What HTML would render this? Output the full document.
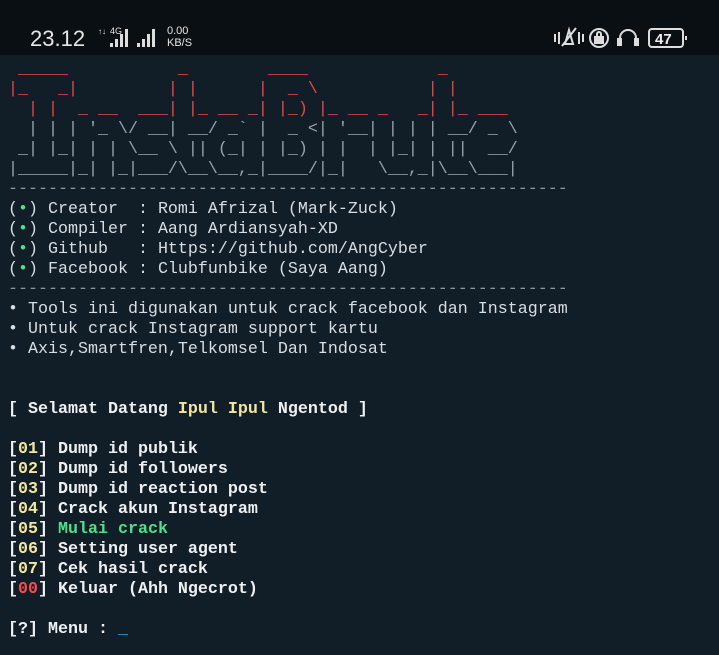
<!DOCTYPE html>
<html><head><meta charset="utf-8"><style>
html,body{margin:0;padding:0;width:719px;height:655px;overflow:hidden;background:#111d27;}
#sb{position:absolute;left:0;top:0;width:719px;height:55px;background:#0a0f13;color:#e6e6e6;font-family:"Liberation Sans",sans-serif;}
#t{position:absolute;left:8px;top:60px;margin:0;font-family:"Liberation Mono",monospace;font-size:16.67px;line-height:20px;color:#d8dde2;white-space:pre;}
.r{color:#e8464b}.g{color:#9aa3ab}.d{color:#8e979e}.gr{color:#4fe08a}.y{color:#f3e7a0}.b{font-weight:bold;color:#eef0f2}.rd{color:#ff4a4a}.cur{color:#1fa6d8}
</style></head><body>
<div id="sb">
<span style="position:absolute;left:30px;top:26px;font-size:22px;">23.12</span>
<span style="position:absolute;left:98px;top:27px;font-size:8px;">↑↓</span>
<span style="position:absolute;left:110px;top:26px;font-size:9px;">4G</span>
<svg style="position:absolute;left:110px;top:29px" width="54" height="20"><rect x="0" y="14" width="3" height="4" fill="#ddd"/><rect x="5" y="10" width="3" height="8" fill="#ddd"/><rect x="10" y="5" width="3" height="13" fill="#ddd"/><rect x="27" y="14" width="3" height="4" fill="#ddd"/><rect x="32" y="10" width="3" height="8" fill="#ddd"/><rect x="37" y="5" width="3" height="13" fill="#ddd"/><rect x="42" y="0" width="3" height="18" fill="#ddd"/><rect x="15" y="0" width="3" height="18" fill="#ddd"/></svg>
<span style="position:absolute;left:167px;top:25px;font-size:11px;line-height:12px;">0.00<br>KB/S</span>
<svg style="position:absolute;left:552px;top:26px" width="140" height="24" fill="none" stroke="#ddd" stroke-width="2"><path d="M3 8v8M7 6v12M13 18l4-14 4 14zM27 6v12M31 8v8M10 20l14-18"/><circle cx="47" cy="12" r="9"/><rect x="43" y="11" width="8" height="6" fill="#ddd"/><path d="M45 11v-3a2 2 0 0 1 4 0v3"/><path d="M68 18v-6a8 8 0 0 1 16 0v6M66 13h3v6h-3zM83 13h3v6h-3z"/><rect x="97" y="3" width="34" height="18" rx="3"/><path d="M134 10v4"/><text x="103" y="18" fill="#eee" stroke="none" font-family="Liberation Sans" font-size="15" font-weight="bold">47</text></svg>
</div>
<pre id="t"><span class="r"> _____           _        ____             _
|_   _|         | |      |  _ \           | |
  | |  _ __  ___| |_ __ _| |_) |_ __ _   _| |_ ___</span><span class="g">
  | | | '_ \/ __| __/ _` |  _ &lt;| '__| | | | __/ _ \
 _| |_| | | \__ \ || (_| | |_) | |  | |_| | ||  __/
|_____|_| |_|___/\__\__,_|____/|_|   \__,_|\__\___|</span>
<span class="d">--------------------------------------------------------</span>
(<span class="gr">•</span>) Creator  : Romi Afrizal (Mark-Zuck)
(<span class="gr">•</span>) Compiler : Aang Ardiansyah-XD
(<span class="gr">•</span>) Github   : Https://github.com/AngCyber
(<span class="gr">•</span>) Facebook : Clubfunbike (Saya Aang)
<span class="d">--------------------------------------------------------</span>
• Tools ini digunakan untuk crack facebook dan Instagram
• Untuk crack Instagram support kartu
• Axis,Smartfren,Telkomsel Dan Indosat


<span class="b">[ Selamat Datang <span class="y">Ipul Ipul</span> Ngentod ]</span>

<span class="b">[<span class="y">01</span>] Dump id publik
[<span class="y">02</span>] Dump id followers
[<span class="y">03</span>] Dump id reaction post
[<span class="y">04</span>] Crack akun Instagram
[<span class="y">05</span>] <span class="gr">Mulai crack</span>
[<span class="y">06</span>] Setting user agent
[<span class="y">07</span>] Cek hasil crack
[<span class="rd">00</span>] Keluar (Ahh Ngecrot)

[?] Menu : <span class="cur">_</span></span></pre>
</body></html>
